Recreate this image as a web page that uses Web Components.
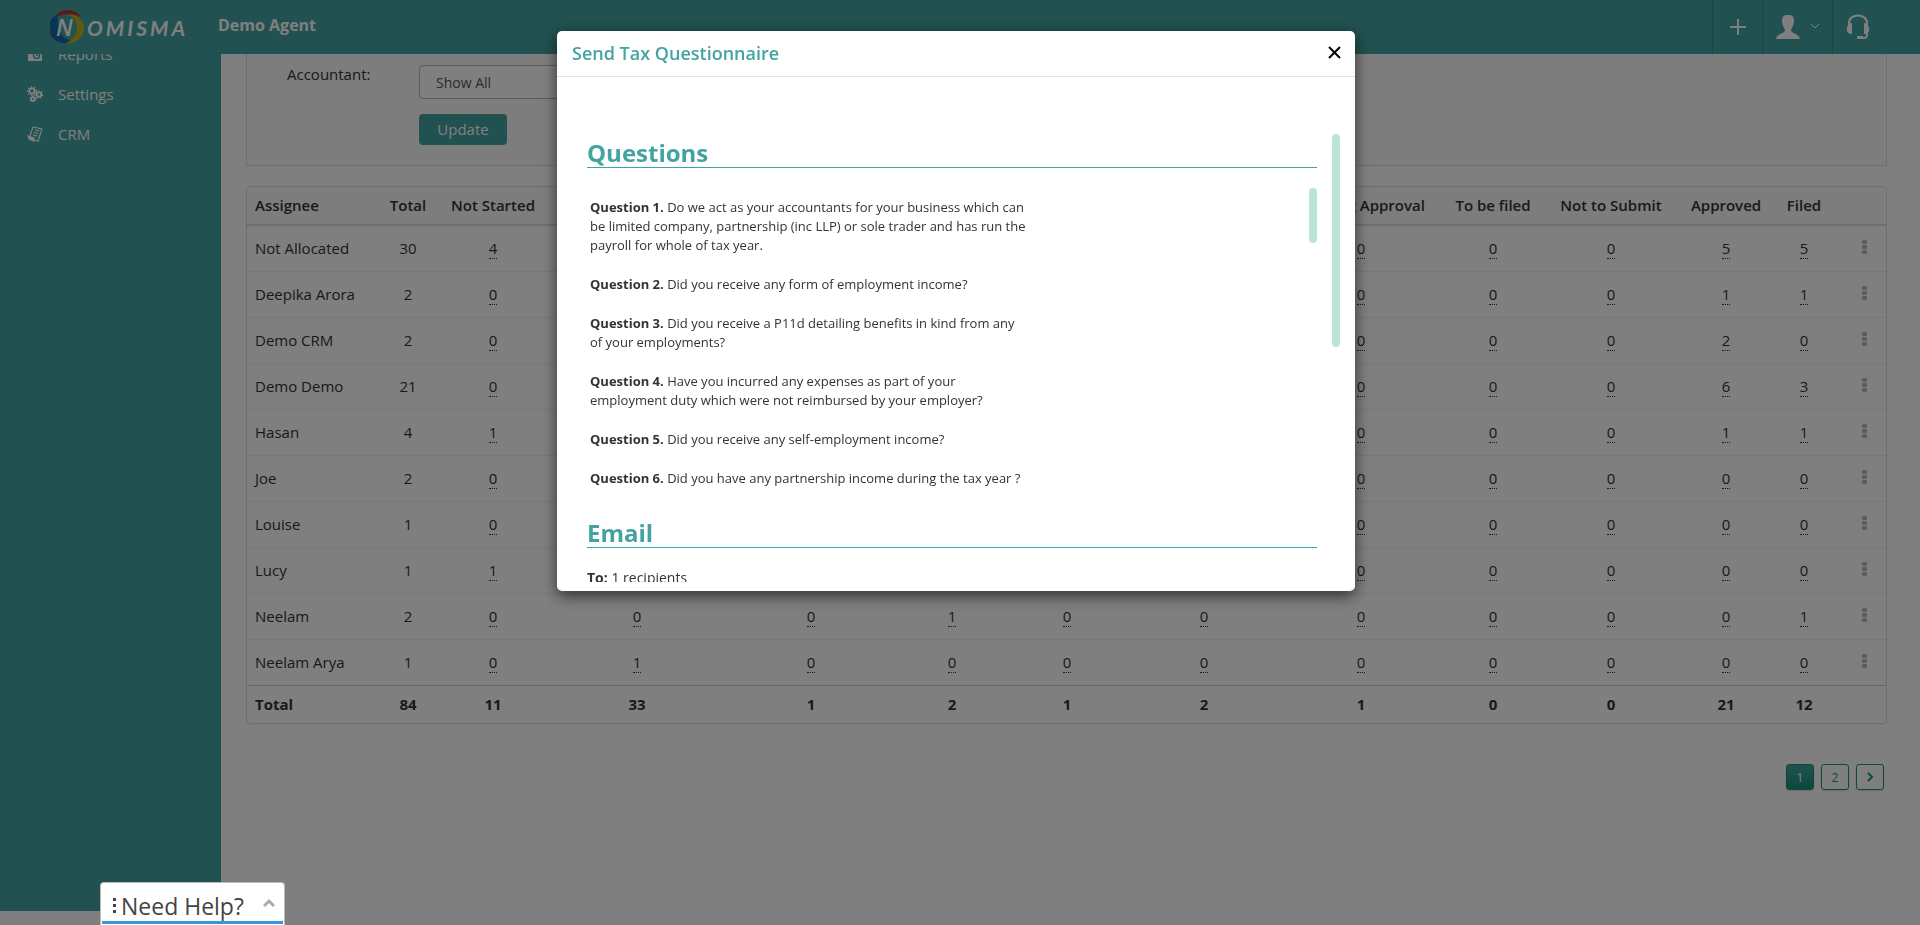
<!DOCTYPE html>
<html lang="en"><head><meta charset="utf-8"><title>Nomisma</title>
<style>html,body{margin:0;height:100%;overflow:hidden;background:#fff;color:#333;font:16px/22px "Open Sans",sans-serif}</style></head>
<body><nomisma-app></nomisma-app>
<script>
const define=(name,css,html)=>customElements.define(name,class extends HTMLElement{
  constructor(){super();this.attachShadow({mode:'open'}).innerHTML='<style>*{box-sizing:border-box}'+css+'</style>'+(typeof html==='function'?html(this):html)}
});

define('top-bar',`:host{display:flex;align-items:stretch;height:54px;background:#43a3a0;color:#fff}
.logo{display:block;margin-left:50px;width:148px;height:54px}
h1{margin:0 auto 0 20px;font-size:16px;line-height:50px;font-weight:700}
nav{display:flex;margin-right:38px}
button{display:flex;align-items:center;justify-content:center;gap:10px;width:50px;padding:0;border:0;border-left:1px solid #318c89;background:none;color:#fff}
.user{width:70px}`,
`<svg class="logo" viewBox="0 0 148 54" role="img" aria-label="Nomisma">
<path d="M4 18A16 16 0 0 1 31 17Q18 11 4 18z" fill="#b8323a"/><path d="M8 14C-6 20-4 42 15 43.500Q22 44 25 41Q5 40 8 14z" fill="#1769a8"/><path d="M17 15Q30 12 34 26C35 37 25 45 15 43.500Q28 38 27 25Q26 17 17 15z" fill="#c4b01c"/>
<g fill="#fff" font-style="italic"><text x="6" y="36" font-size="23" font-weight="600" font-family="Open Sans,sans-serif">N</text><text x="37" y="36" font-size="21" font-weight="700" letter-spacing="3" font-family="Lato,sans-serif">OMISMA</text></g></svg>
<h1>Demo Agent</h1><nav>
<button aria-label="Add"><svg width="18" height="18"><path d="M9 1v16M1 9h16" stroke="#fff" stroke-width="2"/></svg></button>
<button class="user" aria-label="Account"><svg width="24" height="26" viewBox="0 0 24 26" fill="#fff"><path d="M12 1c4 0 6 1 6 6 0 4-2 6-3 9 0 4 8 3 9 9H0c1-6 9-5 9-9-1-3-3-5-3-9 0-5 2-6 6-6z"/></svg><svg width="10" height="8"><path d="M1 1l4 4 4-4" fill="none" stroke="#fff"/></svg></button>
<button aria-label="Support"><svg width="24" height="26" viewBox="0 0 24 26"><path d="M3 12V9C3-1 21-1 21 9v12q0 3-4 3h-4" fill="none" stroke="#fff" stroke-width="2"/><path d="M6 9v11C-1 20-1 10 6 9M18 9v11c7 0 7-10 0-11M11 22h6v3h-6z" fill="#fff"/></svg></button></nav>`);

define('side-bar',`:host{display:block;width:221px;background:#43a3a0;overflow:hidden}
nav{margin-top:-20px}a{display:flex;align-items:center;gap:15px;height:40px;padding-left:27px;color:#fff;text-decoration:none;font-size:15px}svg{display:block}`,
`<nav><a href="#"><svg width="16" height="16" viewBox="0 0 16 16"><path d="M1 2h5v2h9v11H1z" fill="#fff"/><circle cx="9.500" cy="9.500" r="3" fill="none" stroke="#43a3a0" stroke-width="1.500"/><path d="M9.500 7.500v2h2" fill="none" stroke="#43a3a0"/></svg>Reports</a>
<a href="#"><svg width="16" height="16" viewBox="0 0 16 16" fill="none" stroke="#fff"><g stroke-width="1.800"><circle cx="5" cy="5" r="2.600"/><circle cx="12" cy="8.500" r="2.200"/><circle cx="6" cy="13" r="1.800"/></g><g stroke-width="1.400" stroke-dasharray="1.500 1.500"><circle cx="5" cy="5" r="4.200"/><circle cx="12" cy="8.500" r="3.500"/><circle cx="6" cy="13" r="2.800"/></g></svg>Settings</a>
<a href="#"><svg width="16" height="16" viewBox="0 0 16 16" fill="none" stroke="#fff" stroke-width="1.200"><path d="M6 1l9 2-4 12-4-1M6 1L3 10M8 4l4.500 1M7 6.500l4.500 1M6 9l4.500 1"/><path d="M1 10l6 2v3l-5-2z" fill="#fff"/></svg>CRM</a></nav>`);

define('filter-panel',`:host{display:block;height:112px;border:1px solid #ddd;border-top:0;background:#fafafa}
form{display:grid;grid-template-columns:132px minmax(0,328px);row-gap:15px;padding:11px 40px;justify-items:start}
label{line-height:19px;font-size:15px}select{appearance:none;width:100%;height:34px;padding:0 16px;border:1px solid #bbb;border-radius:4px;background:#fff;color:#555;font:14px "Open Sans"}
button{grid-column:2;width:88px;height:31px;padding:0 0 2px;border:0;border-radius:4px;background:#43a3a0;color:#fff;font:15px "Open Sans"}`,
`<form onsubmit="return false"><label for="acc">Accountant:</label><select id="acc"><option>Show All</option></select><button>Update</button></form>`);

const cols=[126,70,100,188,160,122,108,166,148,116,120,110,46,61];
const heads=['Assignee','Total','Not Started','Info Requested','Info Received','In Progress','On Hold','Ready for Review','Pending Approval','To be filed','Not to Submit','Approved','Filed',''];
const rows=[['Not Allocated',30,4,12,1,0,1,1,0,0,0,5,5],['Deepika Arora',2,0,0,0,0,0,0,0,0,0,1,1],['Demo CRM',2,0,0,0,0,0,0,0,0,0,2,0],['Demo Demo',21,0,9,0,1,1,1,0,0,0,6,3],['Hasan',4,1,1,0,0,0,0,0,0,0,1,1],['Joe',2,0,2,0,0,0,0,0,0,0,0,0],['Louise',1,0,1,0,0,0,0,0,0,0,0,0],['Lucy',1,1,0,0,0,0,0,0,0,0,0,0],['Neelam',2,0,0,0,1,0,0,0,0,0,0,1],['Neelam Arya',1,0,1,0,0,0,0,0,0,0,0,0]];
const total=['Total',84,11,33,1,2,1,2,1,0,0,21,12];
define('assignee-table',`:host{display:block;border:1px solid #ddd;border-radius:4px;box-shadow:0 1px 1px #0001;overflow:hidden}
table{width:100%;table-layout:fixed;border-collapse:separate;border-spacing:0;font-size:15px}
th,td{padding:0 0 2px;text-align:center;white-space:nowrap;height:46px;border-bottom:1px solid #eee;vertical-align:middle}
th:first-child,td:first-child{text-align:left;padding-left:8px}
thead th{height:39px;background:#fafafa;border-bottom:2px solid #ddd;font-weight:600;color:#333}
tbody tr:last-child td{border-bottom-color:#ccc}
tfoot td{height:37px;border:0;font-weight:700;color:#333}
a{display:inline-block;color:inherit;text-decoration:none;line-height:20px;border-bottom:1px dotted #333}
button{display:block;margin:0 auto;padding:0 0 2px 14px;border:0;background:none}svg{display:block}`,
()=>`<table><colgroup>${cols.map(w=>`<col style="width:${w}px">`).join('')}</colgroup><thead><tr>${heads.map(h=>`<th scope="col">${h}</th>`).join('')}</tr></thead><tbody>${rows.map(r=>`<tr>${r.map((v,i)=>`<td>${i>1?`<a href="#">${v}</a>`:v}</td>`).join('')}<td><button aria-label="Row menu"><svg width="5" height="16" fill="#bbb"><rect y="1" width="5" height="4" rx="1"/><rect y="6" width="5" height="4" rx="1"/><rect y="11" width="5" height="4" rx="1"/></svg></button></td></tr>`).join('')}</tbody><tfoot><tr>${total.map(v=>`<td>${v}</td>`).join('')}<td></td></tr></tfoot></table>`);

define('page-links',`:host{display:flex;justify-content:flex-end;gap:7px;padding-right:3px}
button{width:28px;height:26px;padding:0;border:1px solid #18917d;border-radius:3px;background:none;color:#18917d;font:12px "Open Sans";box-shadow:0 1px 2px #0002}
.on{background:linear-gradient(#43a3a0,#18917d);color:#fff}svg{display:block;margin:auto}`,
`<button class="on">1</button><button>2</button><button aria-label="Next"><svg width="8" height="10"><path d="M2 1l4 4-4 4" fill="none" stroke="#18917d" stroke-width="2"/></svg></button>`);

define('tax-dialog',`:host{display:flex;flex-direction:column;width:798px;height:560px;background:#fff;border-radius:5px;box-shadow:0 5px 15px rgba(0,0,0,.6);overflow:hidden}
header{display:flex;align-items:center;justify-content:space-between;height:46px;padding:0 14px 2px 15px;border-bottom:1px solid #e2e2e2}
h2{margin:0;font-size:18px;font-weight:600;color:#43a3a0}header button{padding:0;border:0;background:none}svg{display:block}
.body{display:flex;flex:1;min-height:0;margin:57px 15px 9px 30px;justify-content:space-between}
.content{width:730px;overflow:hidden}
h3{margin:0;height:34px;border-bottom:1px solid #43a3a0;color:#43a3a0;font-size:24px;line-height:38px;font-weight:700}
.list{display:flex;justify-content:space-between;height:326px;margin-top:20px;overflow:hidden}
.questions{width:440px;padding:10px 0 0 3px;font-size:13px;line-height:19px}
p{margin:0 0 20px}.bar{width:8px;border-radius:4px;background:#b9e4d8}.outer{height:213px}.inner{height:55px}
.to{margin-top:18px;font-size:14px;line-height:24px}`,
`<header><h2>Send Tax Questionnaire</h2><button aria-label="Close"><svg width="13" height="13"><path d="M1 1l11 11M12 1L1 12" stroke="#000" stroke-width="2"/></svg></button></header>
<div class="body"><div class="content"><h3>Questions</h3><div class="list"><div class="questions">
<p><b>Question 1.</b> Do we act as your accountants for your business which can be limited company, partnership (inc LLP) or sole trader and has run the payroll for whole of tax year.</p><p><b>Question 2.</b> Did you receive any form of employment income?</p><p><b>Question 3.</b> Did you receive a P11d detailing benefits in kind from any of your employments?</p><p><b>Question 4.</b> Have you incurred any expenses as part of your employment duty which were not reimbursed by your employer?</p><p><b>Question 5.</b> Did you receive any self-employment income?</p><p><b>Question 6.</b> Did you have any partnership income during the tax year ?</p></div><div class="bar inner"></div></div>
<h3>Email</h3><p class="to"><b>To:</b> 1 recipients</p></div><div class="bar outer"></div></div>`);

define('help-tab',`:host{display:block;box-sizing:border-box;width:185px;height:43px;padding:0 1px 1px;background:#fff;border:1px solid #bbb;border-bottom:0;border-radius:4px 4px 0 0}
button{display:flex;align-items:center;width:100%;height:41px;padding:8px 8px 0 10px;border:0;border-bottom:3px solid #3498db;background:none;color:#444;font:23px/30px "Open Sans"}.up{margin:0 0 6px auto}`,
`<button><svg width="9" height="18" fill="#444"><path d="M1 1h3v3H1zM1 7h3v3H1zM1 13h3v3H1z"/></svg>Need Help?<svg class="up" width="12" height="10"><path d="M1 8l5-5 5 5" fill="none" stroke="#aaa" stroke-width="3"/></svg></button>`);

define('nomisma-app',`:host{display:block;height:100vh;overflow:hidden}
.page{display:flex;flex-direction:column;height:100%}.main{display:flex;flex:1;min-height:0}side-bar{flex:none;margin-bottom:14px}
main{flex:1;min-width:0;padding:0 33px 0 25px}assignee-table{margin-top:20px}page-links{margin-top:40px}
.backdrop{position:fixed;inset:0;background:rgba(0,0,0,.5);display:flex;justify-content:center;align-items:flex-start;padding:31px 8px 0 0}
help-tab{position:fixed;left:100px;bottom:0}`,
`<div class="page"><top-bar></top-bar><div class="main"><side-bar></side-bar><main><filter-panel></filter-panel><assignee-table></assignee-table><page-links></page-links></main></div></div>
<div class="backdrop"><tax-dialog role="dialog" aria-label="Send Tax Questionnaire"></tax-dialog></div><help-tab></help-tab>`);
</script></body></html>
